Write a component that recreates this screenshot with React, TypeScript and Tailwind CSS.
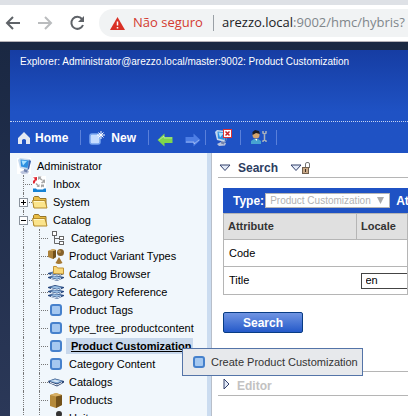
import React from "react";

type IconProps = { className?: string };

function ComputerIcon({ closed = false }: { closed?: boolean }) {
  return (
    <svg width="18" height="18" viewBox="0 0 18 18" className="shrink-0" aria-hidden="true">
      {!closed && <rect x="0" y="1" width="14" height="16" fill="#fff" />}
      <path d="M3 15 8 12.500l4 1.500-1 2.500-6 .5z" fill="#b9c3dd" />
      <path d="M7 11l4 1-1 3.500-3-1z" fill="#7182ad" />
      <path d="M1 3 3 1l10 1 1 2-2 8-1 1-8-2z" fill="#c5d9ee" />
      <path d="M3.500 2.500 12 3.500l-1.500 7.500L4 9.500z" fill="#2d8fe0" />
      <path d="M4.500 3.500 10 4 6 8.500z" fill="#a9e2ff" />
      <path d="M12 3l2 1-2 8-1.500 1z" fill="#3b62ae" />
      {closed && (
        <g>
          <rect x="9.500" y=".5" width="8" height="8" fill="#fff" stroke="#d33" />
          <path d="M11.500 2.500l4 4m0-4-4 4" stroke="#c22" strokeWidth="1.500" />
        </g>
      )}
    </svg>
  );
}

function InboxIcon() {
  return (
    <svg width="16" height="16" viewBox="0 0 16 16" className="shrink-0" aria-hidden="true">
      <rect x="1" width="13" height="16" fill="#fff" />
      <path d="M1 7.500V5l2-2-2-1.500 4-.5v4L4 4 2.500 7.500z" fill="#e02530" />
      <path d="M6 .5h3.500L8.500 2l2 1.500-1 1-2-1.500-1.500 1zM13 3.500v4L12 6.500l-2 1-1-1 2-1.500-1-1zM3.500 8l1-1 2 2 1-1v3h-3l1-1zM9 8.500h3v3l-1-1-2 1z" fill="#a5a5a5" />
      <path d="M1 12.500h3l1 1h6l1-1h2V16H1z" fill="#1682d4" />
    </svg>
  );
}

function FolderIcon() {
  return (
    <svg width="16" height="14" viewBox="0 0 16 14" className="shrink-0" aria-hidden="true">
      <path d="M1.500 12V2.500l1-1h4l1.500 2h6v9z" fill="#e9bd45" stroke="#96752a" />
      <path d="M.5 5.500h12.500l2 7.500H2z" fill="#fbe48c" stroke="#b58c2d" />
      <path d="M2 6.500h10" stroke="#fff6c9" />
    </svg>
  );
}

function CategoriesIcon() {
  return (
    <svg width="16" height="16" viewBox="0 0 16 16" className="shrink-0" aria-hidden="true" fill="#fff" stroke="#666">
      <path d="M6.500 6v7.500H11M6.500 8.500H11" fill="none" />
      <rect x="4.500" y="1.500" width="4" height="4" />
      <rect x="11.500" y="6.500" width="4" height="3" />
      <rect x="11.500" y="11.500" width="4" height="3" />
    </svg>
  );
}

function VariantIcon() {
  return (
    <svg width="16" height="16" viewBox="0 0 16 16" className="shrink-0" aria-hidden="true">
      <path d="M0 3 5 1l3 1v7l-3 2-5-2z" fill="#ad823a" />
      <path d="M5 3l3-1v7l-3 2z" fill="#71501b" />
      <path d="M0 3l5-2 3 1-3 1z" fill="#d4ae66" />
      <circle cx="12.500" cy="4.500" r="3.500" fill="#86622b" />
      <circle cx="11.500" cy="3.500" r="1.500" fill="#b88c48" />
      <path d="M11 9l3.500 6q-4 2-7 0z" fill="#a47832" />
    </svg>
  );
}

function BookIcon() {
  return (
    <svg width="16" height="9" viewBox="0 0 16 9" className="shrink-0" aria-hidden="true">
      <path d="M0 3l7-2.500L16 3v1.500L9 8.500 1 5z" fill="#243e6d" />
      <path d="M1 3l6-2 8 2-6 2.500z" fill="#87afd9" />
      <path d="M3 3l4-1 5 1-3 1z" fill="#e1edf8" />
      <path d="M2 4.500 9 7l5-2.500" fill="none" stroke="#fff" />
    </svg>
  );
}

function BooksIcon({ folder = false }: { folder?: boolean }) {
  return (
    <svg width="16" height="16" viewBox="0 0 16 16" className="shrink-0" aria-hidden="true">
      {[9, 5, 1].slice(0, folder ? 2 : 3).map((y) => (
        <g key={y} transform={`translate(0 ${y})`}>
          <path d="M0 2l7-2 9 2v1L9 6 0 3z" fill="#28497f" />
          <path d="M2 2l5-1 7 1-5 2z" fill="#9abfe3" />
          <path d="M3 3.500 9 5l4-1.500" fill="none" stroke="#e6f1fb" />
        </g>
      ))}
      {folder && <path d="M5.500 7.500v-7h3l1 1.500h6v6z" fill="#f9d878" stroke="#c09236" />}
    </svg>
  );
}

function ItemIcon() {
  return (
    <svg width="12" height="12" viewBox="0 0 12 12" className="shrink-0" aria-hidden="true">
      <rect x="1" y="1" width="10" height="10" rx="2" fill="#a5c8f0" stroke="#4681cc" strokeWidth="2" />
    </svg>
  );
}

function ProductIcon() {
  return (
    <svg width="12" height="16" viewBox="0 0 12 16" className="shrink-0" aria-hidden="true">
      <path d="M0 3l6-2 6 2v10l-6 3-6-2z" fill="#b58a3a" />
      <path d="M6 4l6-1v10l-6 3z" fill="#74521a" />
      <path d="M0 3l6-2 6 2-6 1.500z" fill="#d7b066" />
    </svg>
  );
}

function UnitIcon() {
  return (
    <svg width="16" height="16" viewBox="0 0 16 16" className="shrink-0" aria-hidden="true">
      <circle cx="11" cy="4" r="3" fill="#333" />
      <path d="M7 9l4-2 4 2v6H7z" fill="#555" />
    </svg>
  );
}

function HomeIcon() {
  return (
    <svg width="12" height="12" viewBox="0 0 12 12" aria-hidden="true">
      <path d="M6 0 0 6v6h4V8q2-2 4 0v4h4V6z" fill="#e3e8f2" />
    </svg>
  );
}

function NewIcon() {
  return (
    <svg width="16" height="14" viewBox="0 0 16 14" aria-hidden="true">
      <rect x="1" y="3" width="10" height="10" rx="2" fill="#c5dcff" stroke="#78a5f0" strokeWidth="1.500" />
      <path d="M12 0v8M8 4h8M9.500 1.500l5 5m0-5-5 5" stroke="#fff" />
    </svg>
  );
}

function ToolArrow({ className }: IconProps) {
  return (
    <svg width="16" height="14" viewBox="0 0 16 14" className={className} aria-hidden="true">
      <path d="M.5 7 7.500.5V4h8v6h-8v3.500z" fill="currentColor" />
      <path d="M2 7l5-4v2h8" fill="none" stroke="#fff" strokeOpacity=".4" />
    </svg>
  );
}

function UserToolsIcon() {
  return (
    <svg width="17" height="15" viewBox="0 0 17 15" aria-hidden="true">
      <path d="M0 14v-3l3-2h4l3 2v3z" fill="#47a3d1" />
      <circle cx="5" cy="5" r="3.500" fill="#d4a56d" />
      <path d="M1.500 5V2L4 0l4 1 1 3-4-1z" fill="#1b1b25" />
      <path d="M4 9h2v2z" fill="#fff" />
      <path d="M12 1v2l1.500 1L15 3V1M13.500 4v6M12 12v-1l1.500-1 1.500 1v1" fill="none" stroke="#a9b2bc" strokeWidth="1.500" />
    </svg>
  );
}

function Triangle({ className }: IconProps) {
  return (
    <svg width="12" height="8" viewBox="0 0 12 8" className={className} aria-hidden="true">
      <path d="M1 1h10L6 6.500z" fill="#e3eaf8" stroke="#33406b" />
    </svg>
  );
}

function LockIcon() {
  return (
    <svg width="8" height="12" viewBox="0 0 8 12" aria-hidden="true">
      <path d="M3.500 5V2q0-1.500 1.500-1.500h1Q7.500.5 7.500 2v4" fill="none" stroke="#777" />
      <rect x=".5" y="5.500" width="6" height="6" fill="#c9a988" stroke="#71604e" />
      <path d="M3.500 7v3" stroke="#403024" />
    </svg>
  );
}

function Rail({ branch = false, box }: { branch?: boolean; box?: "+" | "-" }) {
  return (
    <span className={`relative h-full shrink-0 ${branch ? "w-[9px]" : "w-4"}`} aria-hidden="true">
      <span className="block h-full border-l border-dotted border-[#777]" />
      {branch && <span className="absolute left-0 top-[9px] w-full border-t border-dotted border-[#777]" />}
      {box && (
        <svg width="9" height="9" viewBox="0 0 9 9" className="absolute -left-1 top-[5px]">
          <rect x=".5" y=".5" width="8" height="8" fill="#fff" stroke="#8a929c" />
          <path d={box === "+" ? "M2 4.500h5M4.500 2v5" : "M2 4.500h5"} stroke="#000" />
        </svg>
      )}
    </span>
  );
}

type Entry = { label: string; icon: React.ReactNode; depth: 1 | 2; box?: "+" | "-"; selected?: boolean; wide?: boolean };

const entries: Entry[] = [
  { label: "Inbox", icon: <InboxIcon />, depth: 1 },
  { label: "System", icon: <FolderIcon />, depth: 1, box: "+" },
  { label: "Catalog", icon: <FolderIcon />, depth: 1, box: "-" },
  { label: "Categories", icon: <CategoriesIcon />, depth: 2, wide: true },
  { label: "Product Variant Types", icon: <VariantIcon />, depth: 2 },
  { label: "Catalog Browser", icon: <BooksIcon folder />, depth: 2 },
  { label: "Category Reference", icon: <BooksIcon />, depth: 2 },
  { label: "Product Tags", icon: <ItemIcon />, depth: 2 },
  { label: "type_tree_productcontent", icon: <ItemIcon />, depth: 2 },
  { label: "Product Customization", icon: <ItemIcon />, depth: 2, selected: true },
  { label: "Category Content", icon: <ItemIcon />, depth: 2 },
  { label: "Catalogs", icon: <BookIcon />, depth: 2 },
  { label: "Products", icon: <ProductIcon />, depth: 2 },
  { label: "Units", icon: <UnitIcon />, depth: 2 },
];

function Tree() {
  return (
    <nav aria-label="Explorer" className="w-[201px] shrink-0 whitespace-nowrap border-r-4 border-[#cbdcf0] bg-[#f1f7fc] pt-1 text-[11px] leading-[18px] text-black">
      <div className="flex h-[18px] items-center gap-0.5 pl-[7px]">
        <ComputerIcon />
        <a href="#admin">Administrator</a>
      </div>
      <ul>
        {entries.map((e) => (
          <li key={e.label} className="flex h-[18px] items-center pl-[13px]">
            {e.depth === 2 && <Rail />}
            <Rail branch box={e.box} />
            <span className="flex w-4 shrink-0 justify-center">{e.icon}</span>
            <a
              href="#item"
              className={
                e.selected
                  ? "ml-0.5 h-4 bg-[#c8d8ec] pl-[5px] pr-0.5 font-bold leading-4 underline"
                  : e.wide
                    ? "ml-[7px]"
                    : "ml-[5px]"
              }
            >
              {e.label}
            </a>
          </li>
        ))}
      </ul>
    </nav>
  );
}

function BrowserBar() {
  return (
    <header className="shrink-0 border-b border-[#b5b2b8] bg-white font-['Open_Sans','Noto_Sans',sans-serif]">
      <div className="h-[5px] bg-[#dee1e6]" />
      <div className="flex h-9 items-center pl-[5px]">
        <button aria-label="Back" className="mr-4 text-[#5f6368]">
          <svg width="16" height="16" viewBox="0 0 16 16" fill="none" stroke="currentColor" strokeWidth="2"><path d="M15 8H2m6-6L2 8l6 6" /></svg>
        </button>
        <button aria-label="Forward" className="mr-4 text-[#babcbe]">
          <svg width="16" height="16" viewBox="0 0 16 16" fill="none" stroke="currentColor" strokeWidth="2"><path d="M1 8h13M8 2l6 6-6 6" /></svg>
        </button>
        <button aria-label="Reload" className="mr-[14px] text-[#5f6368]">
          <svg width="16" height="16" viewBox="0 0 16 16"><path d="M13 4a6 6 0 1 0 1 6" fill="none" stroke="currentColor" strokeWidth="2" /><path d="M15 1v6H9z" fill="currentColor" /></svg>
        </button>
        <div className="flex h-7 min-w-0 flex-1 items-center whitespace-nowrap rounded-l-full bg-[#f1f3f4] pl-[11px] text-[13px]">
          <svg width="15" height="13" viewBox="0 0 15 13" className="shrink-0" aria-hidden="true">
            <path d="M7.500 0 15 13H0z" fill="#d93025" /><path d="M7.500 4.500v4m0 1.500v1.500" stroke="#fff" strokeWidth="1.500" />
          </svg>
          <span className="ml-2 w-[72px] shrink-0 text-[#d33b30]">Não seguro</span>
          <span className="ml-2 h-4 border-l border-[#9aa0a6]" />
          <span className="ml-2 text-[#80868b]"><span className="text-[#202124]">arezzo.local</span>:9002/hmc/hybris?</span>
        </div>
      </div>
    </header>
  );
}

function Banner() {
  return (
    <div className="bg-linear-to-b from-[#163da3] to-[#1f52c4] to-60% text-white">
      <h1 className="h-[71px] whitespace-nowrap pl-[10px] pt-[3px] text-[10px] leading-[18px]">
        Explorer: Administrator@arezzo.local/master:9002: Product Customization
      </h1>
      <div className="flex h-8 items-center border-t border-dotted border-[#c5d3f2] pl-2 text-xs font-bold">
        <button className="flex items-center gap-[5px]"><HomeIcon />Home</button>
        <span className="ml-3 h-[15px] border-l border-[#5a80da]" />
        <button className="ml-2 flex items-center gap-1.5"><NewIcon />New</button>
        <span className="ml-3 h-[15px] border-l border-[#5a80da]" />
        <button aria-label="Back" className="ml-2 pt-1 text-[#7ed64c]"><ToolArrow /></button>
        <button aria-label="Forward" className="ml-3 pt-1 text-[#4d7ee5]"><ToolArrow className="rotate-180" /></button>
        <span className="ml-1 h-[15px] border-l border-[#5a80da]" />
        <button aria-label="Log off" className="ml-2"><ComputerIcon closed /></button>
        <span className="ml-2 h-[15px] border-l border-[#5a80da]" />
        <button aria-label="Settings" className="ml-[10px]"><UserToolsIcon /></button>
        <span className="ml-2 h-[15px] border-l border-[#5a80da]" />
      </div>
    </div>
  );
}

function SearchPanel() {
  return (
    <main className="min-w-0 flex-1 overflow-hidden border-l border-[#b8bfca] bg-white pl-1.5 text-[11px] text-black">
      <div className="flex h-[25px] items-center border-b border-[#b5b5b5] pt-1.5 text-xs font-bold text-[#2c3d5f]">
        <Triangle className="ml-px" />
        <h2 className="ml-[7px]">Search</h2>
        <button aria-label="Unlock search" className="ml-3 flex items-center"><Triangle /><LockIcon /></button>
      </div>
      <form className="pl-[5px] pt-[10px]" onSubmit={(e) => e.preventDefault()}>
        <div className="flex h-[25px] items-center whitespace-nowrap bg-[#1f52c4] pl-[10px] text-xs font-bold text-white">
          <label htmlFor="type">Type:</label>
          <span className="relative ml-px">
            <select id="type" disabled className="block h-[15px] w-[125px] appearance-none border border-[#b5b5b5] bg-white pl-1 text-[10px] font-normal leading-[13px] text-[#b2b2b2] opacity-100">
              <option>Product Customization</option>
            </select>
            <svg width="7" height="7" viewBox="0 0 7 7" className="absolute right-1.5 top-1" aria-hidden="true"><path d="M0 0h7L3.500 7z" fill="#aaa" /></svg>
          </span>
          <span className="ml-1.5">At</span>
        </div>
        <table className="w-full table-fixed border-collapse border border-[#b5b5b5] text-left">
          <thead className="bg-[#e0e0e0] text-[#333]">
            <tr className="h-[26px]">
              <th className="w-[133px] border border-[#b5b5b5] pl-1">Attribute</th>
              <th className="border border-[#b5b5b5] pl-1">Locale</th>
            </tr>
          </thead>
          <tbody>
            <tr className="h-[27px] border-b border-[#b5b5b5]">
              <td className="pl-[5px]"><label htmlFor="code">Code</label></td>
              <td />
            </tr>
            <tr className="h-7">
              <td className="pl-[5px]"><label htmlFor="locale">Title</label></td>
              <td className="pl-1"><input id="locale" defaultValue="en" className="block h-4 w-full border border-r-0 border-[#444] bg-white px-1 outline-none" /></td>
            </tr>
          </tbody>
        </table>
        <button className="mt-[17px] h-[21px] w-20 rounded-xs border border-[#083c84] bg-linear-to-b from-[#7094e2] to-[#2459c9] text-xs font-bold leading-4 text-white">Search</button>
      </form>
      <div className="mt-[38px] flex h-[25px] items-center border-y border-[#b5b5b5] pl-[5px] text-xs font-bold text-[#c2c2c2]">
        <svg width="7" height="12" viewBox="0 0 7 12" aria-hidden="true"><path d="M1 1v10l5-5z" fill="#e3eaf8" stroke="#33406b" /></svg>
        <h2 className="ml-[7px] pt-1">Editor</h2>
      </div>
    </main>
  );
}

export default function App() {
  return (
    <div className="relative flex h-screen flex-col overflow-hidden bg-linear-to-b from-[#182640] to-[#2b3858] font-['Liberation_Sans',Arial,sans-serif]">
      <BrowserBar />
      <div className="flex min-h-0 flex-1 flex-col pl-[10px] pt-2">
        <Banner />
        <div className="flex min-h-0 flex-1 overflow-hidden">
          <Tree />
          <SearchPanel />
        </div>
      </div>
      <div role="menu" className="absolute left-[182px] top-[348px] border border-[#5474a8] bg-[#e7e9ec] text-[11px] text-[#333]">
        <button role="menuitem" className="flex h-[26px] items-center gap-1.5 whitespace-nowrap pl-[10px] pr-1"><ItemIcon />Create Product Customization</button>
      </div>
    </div>
  );
}
